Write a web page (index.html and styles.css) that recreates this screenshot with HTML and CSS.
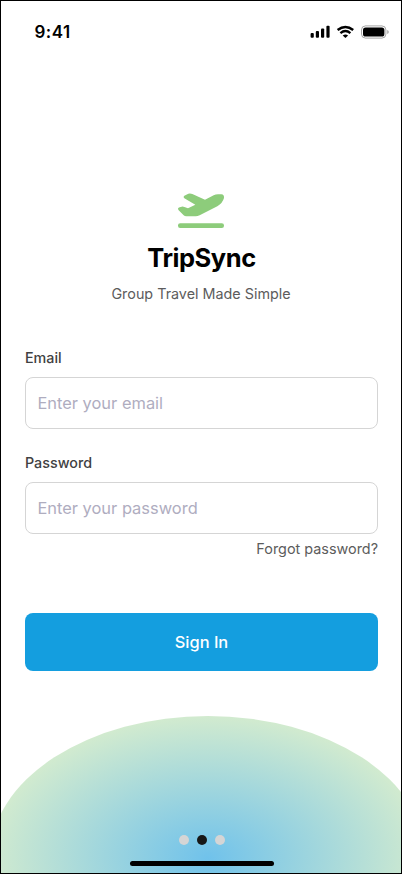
FILE: index.html
```html
<!DOCTYPE html>
<html lang="en">
<head>
<meta charset="utf-8">
<meta name="viewport" content="width=device-width, initial-scale=1">
<title>TripSync</title>
<link rel="stylesheet" href="styles.css">
</head>
<body>
<main class="screen">
  <header class="status">
    <span class="time">9:41</span>
    <svg class="indicators" width="80" height="16" viewBox="0 0 80 16">
      <rect x=".6" y="9" width="3.2" height="4.8" rx="1"/>
      <rect x="5.8" y="7" width="3.2" height="6.8" rx="1"/>
      <rect x="11" y="4.4" width="3.2" height="9.4" rx="1"/>
      <rect x="16.4" y="1.8" width="3.2" height="12" rx="1"/>
      <g fill="none" stroke="#000" stroke-width="2.4">
        <path d="M27.6 6q7.8-6.2 15.6 0"/>
        <path d="M30.4 9.1q5-4 10 0"/>
      </g>
      <path d="M32.7 11.4q2.7-1.9 5.4 0l-2.7 2.6z"/>
      <rect x="51.5" y="1.9" width="24.4" height="12.2" rx="4" fill="none" stroke="#000" stroke-opacity=".35"/>
      <rect x="53" y="3.4" width="21.4" height="9.2" rx="2.6"/>
      <path d="M77.3 6v4q1.4-.5 1.4-2t-1.4-2z" opacity=".4"/>
    </svg>
  </header>
  <section class="brand">
    <svg class="logo" width="75" height="60" viewBox="0 0 225 180">
      <path d="M58 47L70 41Q76 39 82 42L120 59L146 46Q152 43 159 43L169 43Q178 44 177 54Q173 69 157 79L104 106Q98 109 92 109L64 109Q59 109 56 106L41 91Q36 84 44 82L50 80Q54 79 58 81L69 85L91 74L58 55Q53 51 58 47Z"/>
      <rect x="39" y="130" width="138" height="14" rx="6.5"/>
    </svg>
    <h1>TripSync</h1>
    <p>Group Travel Made Simple</p>
  </section>
  <form class="login">
    <label for="email">Email</label>
    <input id="email" type="email" placeholder="Enter your email">
    <label for="password">Password</label>
    <input id="password" type="password" placeholder="Enter your password">
    <a class="forgot">Forgot password?</a>
    <button type="button">Sign In</button>
  </form>
  <footer class="horizon">
    <div class="dots"><i></i><i class="active"></i><i></i></div>
    <div class="home"></div>
  </footer>
</main>
</body>
</html>
```
FILE: styles.css
```css
* { box-sizing: border-box; }
body { margin: 0; background: #fff; font-family: Inter, "Liberation Sans", sans-serif; }
.screen {
  display: flex;
  flex-direction: column;
  width: 402px;
  height: 874px;
  border: 1px solid #000;
  overflow: hidden;
}
.status {
  flex: none;
  display: flex;
  justify-content: space-between;
  height: 179px;
  padding: 21px 11px 0 33.5px;
}
.time { font-size: 17px; font-weight: 600; line-height: 21px; letter-spacing: .5px; }
.indicators { margin-top: 2px; }
.brand { flex: none; display: flex; flex-direction: column; align-items: center; text-align: center; }
.logo { display: block; fill: #8dcc7b; margin-left: 2px; }
h1 { margin: 2px 0 0 1px; font-size: 25.5px; line-height: 32px; font-weight: 700; letter-spacing: -.45px; color: #000; }
.brand p { margin: 10px 0 0; font-size: 14.35px; line-height: 20px; color: #5c5c5c; }
.login { flex: none; display: flex; flex-direction: column; padding: 44px 23px 0 24px; }
label { height: 29px; font-size: 14.3px; line-height: 20px; font-weight: 500; color: #3f4142; }
input {
  width: 100%;
  height: 52px;
  margin: 0 0 24px;
  padding: 0 11.4px;
  border: 1px solid #d5d5d5;
  border-radius: 8px;
  background: #fff;
  font: 400 16.45px Inter, sans-serif;
  outline: 0;
}
input::placeholder { color: #afadbf; opacity: 1; }
#password { margin-bottom: 5px; }
.forgot { align-self: flex-end; font-size: 14.4px; line-height: 20px; color: #5c5c5c; }
button {
  height: 58px;
  margin-top: 54px;
  border: 0;
  border-radius: 8px;
  background: #149edf;
  color: #fff;
  font: 500 16.4px Inter, sans-serif;
}
.horizon {
  flex: none;
  display: flex;
  flex-direction: column;
  align-items: center;
  width: 436px;
  height: 284px;
  margin: 45px 0 0 -11px;
  padding-top: 119px;
  border-radius: 50%;
  background: radial-gradient(ellipse 226px 147px at center, #70c2eb, #d5ecce);
}
.dots { display: flex; gap: 8px; margin-left: -12px; }
.dots i { width: 10px; height: 10px; border-radius: 50%; background: #d5d5d5; }
.dots .active { background: #171717; }
.home { width: 144px; height: 5px; margin: 16px 0 0 -12px; border-radius: 3px; background: #000; }
```
